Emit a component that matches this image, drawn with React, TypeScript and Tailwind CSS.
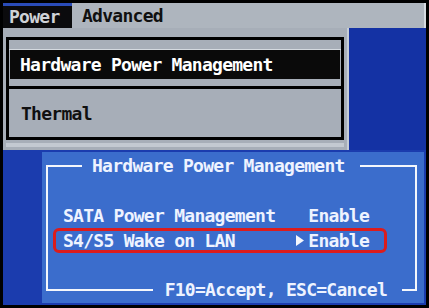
export default function App() {
  return (
    <div
      className="w-[429px] h-[308px] bg-black p-[3px] overflow-hidden"
      style={{ fontFamily: '"DejaVu Sans Mono", "Liberation Mono", monospace' }}
    >
      <div className="w-full h-full flex flex-col">
        {/* menu bar */}
        <div className="h-[25px] bg-[#aeb5be] flex border-r-2 border-[#d6dbe1]">
          <div className="w-[69px] bg-[#0b0b0d] border-t-[3px] border-[#2a4cb8] text-[#cfd2d6] text-[18px] tracking-[-0.73px] font-bold leading-[21px] pl-[6px]">
            Power
          </div>
          <div className="pl-[10px] text-[#101010] text-[18px] tracking-[-0.73px] font-bold leading-[25px]">Advanced</div>
        </div>

        {/* dropdown + right panel */}
        <div className="h-[122px] flex">
          <div className="w-[344px] bg-[#a7aeb8] flex flex-col pl-[3px] pr-[3px] pt-[9px]">
            <div className="h-[103px] border-[3px] border-black flex flex-col">
              <div className="h-[10px] border-b border-[#d5dae0]" />
              <div className="h-[29px] mx-[1px] bg-[#0a0a0a] text-white text-[18px] tracking-[-0.73px] font-bold leading-[29px] pl-[10px]">
                Hardware Power Management
              </div>
              <div className="h-[7px]" />
              <div className="h-[3px] bg-black" />
              <div className="flex-1 flex items-center pl-[12px] text-[#101010] text-[18px] tracking-[-0.73px] font-bold">
                Thermal
              </div>
            </div>
            <div className="mt-[3px] h-[4px] bg-[#c3c9d1]" />
          </div>
          <div className="flex-1 bg-[#1432a4] border-l-2 border-[#c6cdd6]" />
        </div>

        {/* dialog area */}
        <div className="flex-1 bg-[#1b3cae] flex pl-[39px] pt-[2px] pb-[2px] pr-[2px]">
          <div className="flex-1 bg-[#3b6dcc] flex flex-col text-[#eef3ff] text-[18px] tracking-[-0.73px] font-bold">
            <div className="mt-[13px] ml-[4px] mr-[7px] mb-[12px] flex-1 border-2 border-[#f4f7fc] flex flex-col">
              <div className="-mt-[11px] ml-[34px] w-fit bg-[#3b6dcc] pl-[10px] pr-[15px] leading-[20px]">
                Hardware Power Management
              </div>
              <div className="mt-[27px] ml-[5px] w-[334px] flex flex-col">
                <div className="h-[25px] border-[3px] border-transparent pl-[7px] pr-[15px] flex items-center justify-between">
                  <span>SATA Power Management</span>
                  <span>Enable</span>
                </div>
                <div className="h-[25px] border-[3px] border-[#dc1c1c] rounded-[6px] pl-[7px] pr-[15px] flex items-center justify-between">
                  <span>S4/S5 Wake on LAN</span>
                  <span className="flex items-center">
                    <svg width="8" height="11" viewBox="0 0 8 11" className="mr-[4px]">
                      <polygon points="0,0 8,5.5 0,11" fill="#f4f7fc" />
                    </svg>
                    Enable
                  </span>
                </div>
              </div>
              <div className="mt-auto -mb-[11px] ml-auto mr-[13px] w-fit bg-[#3b6dcc] pl-[12px] pr-[15px] leading-[20px]">
                F10=Accept, ESC=Cancel
              </div>
            </div>
          </div>
        </div>
      </div>
    </div>
  )
}
